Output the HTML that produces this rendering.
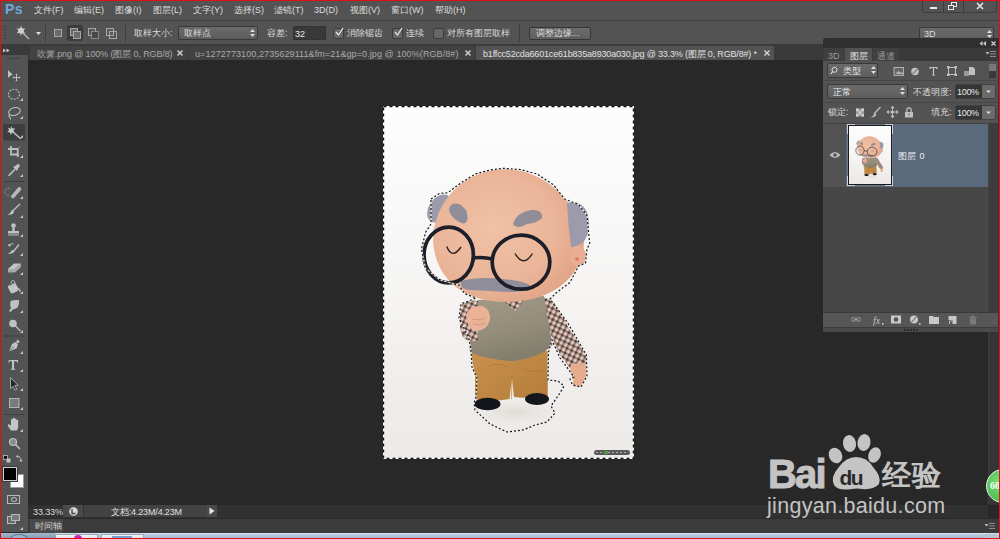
<!DOCTYPE html>
<html><head><meta charset="utf-8">
<style>
*{margin:0;padding:0;box-sizing:border-box}
html,body{width:1000px;height:539px;overflow:hidden;background:#282828;font-family:"Liberation Sans",sans-serif;}
.a{position:absolute}
.t{position:absolute;white-space:nowrap;color:#dcdcdc;font-size:9px;line-height:10px}
</style></head><body>
<div class="a" style="left:0;top:0;width:1000px;height:539px;background:#282828;overflow:hidden">

<!-- menu bar -->
<div class="a" style="left:0;top:0;width:1000px;height:20px;background:#535353"></div>
<div class="a" style="left:0;top:20px;width:1000px;height:1px;background:#3d3d3d"></div>
<!-- options bar -->
<div class="a" style="left:0;top:21px;width:1000px;height:24px;background:#535353"></div>
<div class="a" style="left:0;top:44px;width:1000px;height:1px;background:#3b3b3b"></div>

<!-- PS logo -->
<div class="t" style="left:5px;top:1px;font-size:14px;line-height:16px;font-weight:bold;color:#70a8dc;letter-spacing:0.3px">Ps</div>
<!-- menu -->
<div class="t" style="left:34px;top:5px">文件(F)</div>
<div class="t" style="left:74px;top:5px">编辑(E)</div>
<div class="t" style="left:115px;top:5px">图像(I)</div>
<div class="t" style="left:153px;top:5px">图层(L)</div>
<div class="t" style="left:193px;top:5px">文字(Y)</div>
<div class="t" style="left:234px;top:5px">选择(S)</div>
<div class="t" style="left:274px;top:5px">滤镜(T)</div>
<div class="t" style="left:314px;top:5px">3D(D)</div>
<div class="t" style="left:350px;top:5px">视图(V)</div>
<div class="t" style="left:391px;top:5px">窗口(W)</div>
<div class="t" style="left:435px;top:5px">帮助(H)</div>
<!-- window controls -->
<div class="a" style="left:922px;top:-3px;width:75px;height:16px;border:1px solid #3c3c3c;border-radius:3px;background:#535353"></div>
<div class="a" style="left:943px;top:0;width:1px;height:13px;background:#3c3c3c"></div>
<div class="a" style="left:963px;top:0;width:1px;height:13px;background:#3c3c3c"></div>
<div class="a" style="left:930px;top:7px;width:7px;height:2px;background:#e8e8e8"></div>
<svg class="a" style="left:948px;top:2px" width="10" height="9"><rect x="3.5" y="0.5" width="5" height="4" fill="none" stroke="#e8e8e8"/><rect x="0.5" y="3.5" width="5" height="4" fill="#535353" stroke="#e8e8e8"/></svg>
<svg class="a" style="left:976px;top:2px" width="8" height="8"><path d="M1 1L7 7M7 1L1 7" stroke="#e8e8e8" stroke-width="1.6"/></svg>


<!-- options content -->
<div class="a" style="left:4px;top:26px;width:2px;height:14px;background:repeating-linear-gradient(#3a3a3a 0 1px,transparent 1px 3px)"></div>
<svg class="a" style="left:15px;top:25px" width="16" height="16"><path d="M7 7L14 14" stroke="#b4b4b4" stroke-width="1.5"/><path d="M6 0.5L7.2 3.6L10.5 3.2L8.3 5.8L10.3 8.6L7 7.8L5.8 11L4.8 7.8L1.5 8.4L3.6 5.8L1.5 3.2L4.8 3.7Z" fill="#c4c4c4"/><circle cx="6" cy="5.8" r="2.6" fill="#d0d0d0"/></svg>
<svg class="a" style="left:35.5px;top:32px" width="5" height="3"><path d="M0 0H5L2.5 3Z" fill="#e0e0e0"/></svg>
<div class="a" style="left:45px;top:25px;width:1px;height:17px;background:#3e3e3e"></div>
<div class="a" style="left:54px;top:29px;width:8px;height:8px;border:1px solid #a8a8a8;background:#6a6a6a"></div>
<div class="a" style="left:67px;top:25px;width:16px;height:16px;border-radius:2px;background:#3b3b3b"></div>
<div class="a" style="left:70px;top:28px;width:8px;height:8px;border:1px solid #a8a8a8;background:#6a6a6a"></div>
<div class="a" style="left:73px;top:31px;width:8px;height:8px;border:1px solid #a8a8a8;background:#6a6a6a"></div>
<div class="a" style="left:88px;top:28px;width:8px;height:8px;border:1px solid #a8a8a8;background:#585858"></div>
<div class="a" style="left:91px;top:31px;width:8px;height:8px;border:1px solid #888;background:#474747"></div>
<div class="a" style="left:106px;top:28px;width:8px;height:8px;border:1px solid #a8a8a8;background:#585858"></div>
<div class="a" style="left:109px;top:31px;width:8px;height:8px;border:1px solid #a8a8a8;background:transparent"></div>
<div class="a" style="left:125px;top:25px;width:1px;height:17px;background:#3e3e3e"></div>
<div class="t" style="left:134px;top:28px">取样大小:</div>
<div class="a" style="left:178px;top:26px;width:80px;height:14px;border:1px solid #383838;border-radius:2px;background:linear-gradient(#6a6a6a,#5c5c5c)"></div>
<div class="t" style="left:184px;top:28px">取样点</div>
<svg class="a" style="left:250px;top:29px" width="5" height="8"><path d="M0 3L2.5 0L5 3ZM0 5L2.5 8L5 5Z" fill="#ddd"/></svg>
<div class="t" style="left:267px;top:28px">容差:</div>
<div class="a" style="left:293px;top:26px;width:33px;height:14px;background:#393939;border:1px solid #333"></div>
<div class="t" style="left:295px;top:29px;color:#e8e8e8">32</div>
<div class="a" style="left:333px;top:28px;width:11px;height:11px;border:1px solid #3a3a3a;border-radius:2px;background:#666"></div>
<svg class="a" style="left:334px;top:27px" width="10" height="10"><path d="M2 5L4.5 8L9 1" fill="none" stroke="#e8e8e8" stroke-width="1.3"/></svg>
<div class="t" style="left:347px;top:28px">消除锯齿</div>
<div class="a" style="left:392px;top:28px;width:11px;height:11px;border:1px solid #3a3a3a;border-radius:2px;background:#666"></div>
<svg class="a" style="left:393px;top:27px" width="10" height="10"><path d="M2 5L4.5 8L9 1" fill="none" stroke="#e8e8e8" stroke-width="1.3"/></svg>
<div class="t" style="left:406px;top:28px">连续</div>
<div class="a" style="left:433px;top:28px;width:11px;height:11px;border:1px solid #3a3a3a;border-radius:2px;background:#666"></div>
<div class="t" style="left:447px;top:28px">对所有图层取样</div>
<div class="a" style="left:519px;top:25px;width:1px;height:17px;background:#3e3e3e"></div>
<div class="a" style="left:529px;top:27px;width:62px;height:13px;border:1px solid #363636;border-radius:2px;background:linear-gradient(#6c6c6c,#5e5e5e)"></div>
<div class="t" style="left:536px;top:28px">调整边缘...</div>
<!-- 3D workspace dropdown -->
<div class="a" style="left:919px;top:27px;width:75px;height:14px;border:1px solid #3a3a3a;border-radius:2px;background:linear-gradient(#6a6a6a,#5e5e5e)"></div>
<div class="t" style="left:924px;top:29px">3D</div>
<svg class="a" style="left:987px;top:30px" width="5" height="8"><path d="M0 3L2.5 0L5 3ZM0 5L2.5 8L5 5Z" fill="#ddd"/></svg>

<!-- tab bar -->
<div class="a" style="left:28px;top:45px;width:972px;height:15px;background:#3a3a3a"></div>

<!-- tabs -->
<div class="a" style="left:30px;top:46px;width:157px;height:14px;background:#424242"></div>
<div class="t" style="left:37px;top:49px;color:#a8a8a8;letter-spacing:-0.12px">吹箫.png @ 100% (图层 0, RGB/8)</div>
<svg class="a" style="left:177px;top:50px" width="6" height="6"><path d="M0.5 0.5L5.5 5.5M5.5 0.5L0.5 5.5" stroke="#d8d8d8" stroke-width="1.3"/></svg>
<div class="a" style="left:188px;top:46px;width:287px;height:14px;background:#424242"></div>
<div class="t" style="left:195px;top:49px;color:#a8a8a8;letter-spacing:0.09px">u=1272773100,2735629111&amp;fm=21&amp;gp=0.jpg @ 100%(RGB/8#)</div>
<svg class="a" style="left:465px;top:50px" width="6" height="6"><path d="M0.5 0.5L5.5 5.5M5.5 0.5L0.5 5.5" stroke="#d8d8d8" stroke-width="1.3"/></svg>
<div class="a" style="left:476px;top:46px;width:298px;height:14px;background:#535353"></div>
<div class="t" style="left:483px;top:49px;color:#e0e0e0;letter-spacing:-0.17px">b1ffcc52cda6601ce61b835a8930a030.jpg @ 33.3% (图层 0, RGB/8#) *</div>
<svg class="a" style="left:764px;top:50px" width="6" height="6"><path d="M0.5 0.5L5.5 5.5M5.5 0.5L0.5 5.5" stroke="#d8d8d8" stroke-width="1.3"/></svg>

<!-- toolbar -->
<div class="a" style="left:0;top:45px;width:28px;height:10px;background:#3a3a3a"></div>
<div class="a" style="left:0;top:55px;width:28px;height:477px;background:#535353"></div>

<!-- toolbar icons -->
<svg class="a" style="left:0;top:0" width="30" height="539">
<g fill="#c8c8c8" stroke="none">
<path d="M3 48.5l3 2l-3 2zM6.5 48.5l3 2l-3 2z"/>
</g>
<path d="M7 58.5h14" stroke="#3a3a3a" stroke-dasharray="1.5 0.8"/>
<!-- move -->
<path d="M8 70L13 75L10.5 75.5L8 78Z" fill="#c0c0c0"/>
<path d="M16.5 74.5v6M13.5 77.5h6" stroke="#c0c0c0" stroke-width="1"/>
<path d="M16.5 73.5l-1.2 1.5h2.4zM16.5 81.5l-1.2-1.5h2.4zM12.5 77.5l1.5-1.2v2.4zM20.5 77.5l-1.5-1.2v2.4z" fill="#c0c0c0"/>
<!-- marquee -->
<ellipse cx="14" cy="94.3" rx="5.5" ry="5" fill="none" stroke="#bbb" stroke-width="1.1" stroke-dasharray="2 1.2"/>
<!-- lasso -->
<ellipse cx="14.5" cy="111.5" rx="6" ry="3.8" fill="none" stroke="#bbb" stroke-width="1.1" transform="rotate(-15 14.5 111.5)"/>
<path d="M10 114.5q-2 1.5 -0.5 2.5q1.5 1 1 2.5" fill="none" stroke="#bbb" stroke-width="1.1"/>
<!-- wand selected -->
<rect x="3" y="124" width="22" height="16.5" rx="2" fill="#3d3d3d"/>
<path d="M11 126l1.3 2.5l2.8 -0.3l-1.6 2.3l1.4 2.4l-2.8 -0.5l-1.3 2.5l-0.9 -2.7l-2.8 0.1l2 -2l-1 -2.6l2.6 1Z" fill="#c8c8c8"/>
<path d="M13 132l8 7" stroke="#c0c0c0" stroke-width="1.5"/>
<!-- crop -->
<path d="M11 146v8.5h8M8 149h9.7v8" fill="none" stroke="#bdbdbd" stroke-width="1.8"/>
<path d="M17.5 149l2.5-2.5" stroke="#b0b0b0" stroke-width="0.7"/>
<!-- eyedropper -->
<path d="M15 166.5l2-2q1.2-1 2.3.2q1 1.1 0 2.2l-2 2z" fill="#c4c4c4"/>
<path d="M14 166.5l3.5 3.5" stroke="#c4c4c4" stroke-width="2"/>
<path d="M15 169l-5.8 5.8l-0.7 1l1 -0.6l5.8 -5.8" fill="none" stroke="#bdbdbd" stroke-width="1.1"/>
<!-- sep -->
<path d="M4 181.5h21" stroke="#3f3f3f"/>
<!-- healing -->
<path d="M10.5 189a3.5 3.5 0 1 0 -1 6" fill="none" stroke="#a8a8a8" stroke-width="0.8" stroke-dasharray="1 0.6"/>
<path d="M11 196l7-8.5a2 2 0 0 1 3 2.5l-7 8a2 2 0 0 1 -3 -2z" fill="#b8b8b8"/>
<!-- brush -->
<path d="M12 211.5l8-7.5" stroke="#c0c0c0" stroke-width="1.4"/>
<path d="M7.5 214.5q3 -0.5 4 -4q2 0 2.5 1.5q-1.5 3.5 -6.5 2.5z" fill="#c4c4c4"/>
<!-- stamp -->
<circle cx="13.5" cy="225.5" r="2.3" fill="#c0c0c0"/>
<path d="M12.3 227h2.4v4h-2.4z" fill="#c0c0c0"/>
<path d="M8 231h11v2.5h-11zM8 234.5h11v1h-11z" fill="#c0c0c0"/>
<!-- history brush -->
<path d="M8.5 246q2 -3 5 -2" fill="none" stroke="#bbb" stroke-width="1.1"/>
<path d="M8 244l1.5 3l2 -2.5z" fill="#bbb"/>
<path d="M13 252l6-7.5" stroke="#c0c0c0" stroke-width="1.4"/>
<path d="M8 253.5q3 -0.5 4 -3.5q2 0 2.2 1.5q-1.5 3 -6.2 2z" fill="#c4c4c4"/>
<!-- eraser -->
<path d="M8 269l6-5.5h7l-6 5.5z" fill="#c4c4c4"/>
<path d="M8 269h7v3.5h-7zM15 269l6-5.5v3.5l-6 5.5z" fill="#a8a8a8"/>
<!-- bucket -->
<path d="M11 283.5q0-3.5 2.5-3q2 .5 1.2 3.5" fill="none" stroke="#bbb" stroke-width="1"/>
<path d="M8.5 285.5l6.5-3l3.5 6q0.5 1.5 -1 2.5l-4 2q-2 .8 -3 -.6l-2.5-5q-.5-1.3 .5-1.9z" fill="#c4c4c4"/>
<path d="M8.8 286l6.2-3" stroke="#888" stroke-width="0.8"/>
<path d="M18.5 288.5q2 1.5 1.5 3.5" fill="none" stroke="#c0c0c0" stroke-width="1.4"/>
<!-- smudge -->
<path d="M10.5 301q3-1.5 8.5 -1q0.5 5 -2 8l-4 1.5l-2.5 2.5l-1.5 -1l2 -3q-1.5 -3 -0.5 -7z" fill="#c0c0c0"/>
<!-- dodge/blur -->
<circle cx="13" cy="323.5" r="3.8" fill="#c0c0c0"/>
<path d="M15.5 326l5 5" stroke="#c0c0c0" stroke-width="1.2"/>
<!-- sep -->
<path d="M4 336h21" stroke="#3f3f3f"/>
<!-- pen -->
<path d="M17.5 339.5l2.5 2.5l-2.5 1.5l-1.5-1.5z" fill="#c0c0c0"/>
<path d="M15.5 342l2.5 2.5l-1.5 4l-7.5 3l3-7.5z" fill="#c0c0c0"/>
<path d="M9 351.5l4.5-4.5" stroke="#555" stroke-width="0.8"/>
<!-- type -->
<path d="M9 360h9v2.5h-1l-0.5-1.3h-2.5v7.3l1.3 0.5v0.8h-4.6v-0.8l1.3-0.5v-7.3h-2.5l-0.5 1.3h-1z" fill="#c4c4c4"/>
<!-- path select -->
<path d="M10.5 377.5v11l2.5-2.3l2 4l1.8-0.8l-2-4h3.3z" fill="#282828" stroke="#bdbdbd" stroke-width="0.8"/>
<!-- rectangle -->
<rect x="9.5" y="398.5" width="9.5" height="9" fill="#7a7a7a" stroke="#bdbdbd" stroke-width="0.9"/>
<!-- sep -->
<path d="M4 414.5h21" stroke="#3f3f3f"/>
<!-- hand -->
<path d="M11 430.5l-3-4.5q-.8-1.4 .4-1.8q.9-.3 1.6.6l1 1.2v-6.2q0-1 .9-1q.9 0 .9 1v4v-5q0-1 .9-1q.9 0 .9 1v5v-4.3q0-1 .9-1q.9 0 .9 1v4.3v-3q0-1 .9-1q.9 0 .9 1v5.5q0 2.5 -1.5 4.2z" fill="#c4c4c4"/>
<!-- zoom -->
<circle cx="13" cy="442" r="3.5" fill="#8c8c8c" stroke="#c0c0c0" stroke-width="1.2"/>
<path d="M15.5 444.5l4.5 4.5" stroke="#c0c0c0" stroke-width="1.6"/>
<!-- default colors / swap -->
<rect x="3.5" y="455.5" width="4" height="4" fill="#111" stroke="#c0c0c0" stroke-width="0.8"/>
<rect x="6.5" y="458.5" width="4" height="4" fill="#c0c0c0"/>
<path d="M17 456.5q4 -0.5 4 4" fill="none" stroke="#c0c0c0" stroke-width="1"/>
<path d="M16 456.5l2-1.8v3.6zM21 462l-1.8-2h3.6z" fill="#c0c0c0"/>
<!-- triangles -->
<g fill="#c8c8c8">
<path d="M23 98v3h-3z"/><path d="M23 116v3h-3z"/><path d="M23 155v3h-3z"/><path d="M23 174v3h-3z"/><path d="M23 135v3h-3z"/>
<path d="M23 196v3h-3z"/><path d="M23 215v3h-3z"/><path d="M23 234v3h-3z"/><path d="M23 253v3h-3z"/><path d="M23 272v3h-3z"/>
<path d="M23 291v3h-3z"/><path d="M23 310v3h-3z"/><path d="M23 330v3h-3z"/><path d="M23 351v3h-3z"/><path d="M23 369v3h-3z"/>
<path d="M23 388v3h-3z"/><path d="M23 407v3h-3z"/><path d="M23 429v3h-3z"/><path d="M23 527v3h-3z"/>
</g>
</svg>
<!-- fg/bg color -->
<div class="a" style="left:10px;top:474px;width:14px;height:14px;background:#fff;border:1px solid #999"></div>
<div class="a" style="left:3px;top:467px;width:14px;height:14px;background:#000;border:1px solid #cfcfcf;box-shadow:0 0 0 1px #3a3a3a"></div>
<!-- quick mask -->
<div class="a" style="left:7px;top:495px;width:13px;height:9px;border:1px solid #b8b8b8;background:#555"></div>
<div class="a" style="left:10.5px;top:497px;width:6px;height:5px;border:1px solid #b8b8b8;border-radius:50%"></div>
<!-- screen mode -->
<div class="a" style="left:7px;top:516px;width:9px;height:8px;border:1px solid #b8b8b8;background:#6a6a6a"></div>
<div class="a" style="left:11px;top:514px;width:9px;height:7px;border:1px solid #b8b8b8;background:#7a7a7a"></div>

<!-- status bar -->
<div class="a" style="left:28px;top:505px;width:960px;height:13px;background:#313131"></div>
<div class="a" style="left:30px;top:505px;width:33px;height:12px;background:#323232"></div>
<div class="t" style="left:33px;top:507px;color:#d8d8d8;letter-spacing:-0.1px">33.33%</div>
<div class="a" style="left:63px;top:505px;width:20px;height:12px;background:#4a4a4a"></div>
<svg class="a" style="left:68px;top:506px" width="11" height="11"><circle cx="5.5" cy="5.5" r="4.3" fill="#d8d8d8"/><path d="M4 3v4.5h3.5" fill="none" stroke="#4a4a4a" stroke-width="1.4"/></svg>
<div class="a" style="left:84px;top:505px;width:123px;height:12px;background:#434343"></div>
<div class="t" style="left:111px;top:507px;color:#e0e0e0;letter-spacing:-0.15px">文档:4.23M/4.23M</div>
<div class="a" style="left:207px;top:505px;width:10px;height:12px;background:#4a4a4a"></div>
<svg class="a" style="left:209px;top:507px" width="6" height="8"><path d="M0.5 0.5L5.5 4L0.5 7.5Z" fill="#e8e8e8"/></svg>
<!-- timeline -->
<div class="a" style="left:28px;top:518px;width:972px;height:15px;background:#3b3b3b;border-top:1px solid #2a2a2a"></div>
<div class="a" style="left:30px;top:519px;width:33px;height:14px;background:#4a4a4a"></div>
<div class="t" style="left:35px;top:521px;color:#d0d0d0">时间轴</div>
<svg class="a" style="left:984px;top:522px" width="12" height="8"><path d="M0.5 2h4l-2 2.5z" fill="#c0c0c0"/><path d="M5 1.5h6M5 4h6M5 6.5h6" stroke="#8a8a8a" stroke-width="1.2"/></svg>
<!-- taskbar -->
<div class="a" style="left:0;top:533px;width:1000px;height:6px;background:linear-gradient(#dce8f4,#b0c6dc 35%,#a2b8d0)"></div>
<div class="a" style="left:0;top:533px;width:55px;height:6px;background:linear-gradient(#a4b8cc,#8298b0)"></div>
<div class="a" style="left:10px;top:534px;width:18px;height:10px;border-radius:50%;border:1px solid #5a7a9a;background:#9ab4cc"></div>
<div class="a" style="left:55px;top:534px;width:43px;height:5px;background:linear-gradient(#f4f6f8,#dde4ea);border:1px solid #9aaabb"></div>
<div class="a" style="left:74px;top:535px;width:8px;height:8px;border-radius:50%;background:#d020c0"></div>
<div class="a" style="left:101px;top:534px;width:43px;height:5px;background:linear-gradient(#f4f6f8,#dde4ea);border:1px solid #9aaabb"></div>
<div class="a" style="left:112px;top:536px;width:20px;height:3px;background:#7aa0d0"></div>
<div class="a" style="left:986px;top:534px;width:12px;height:5px;background:#b8c4d0"></div>
<!-- image -->

<svg class="a" style="left:383px;top:106px" width="251" height="353" viewBox="383 106 251 353">
<defs>
 <linearGradient id="bg" x1="0" y1="0" x2="0" y2="1"><stop offset="0" stop-color="#fdfdfd"/><stop offset="0.5" stop-color="#f6f5f4"/><stop offset="1" stop-color="#ece9e7"/></linearGradient>
 <radialGradient id="skin" cx="0.4" cy="0.45" r="0.7"><stop offset="0" stop-color="#f0c2a6"/><stop offset="0.6" stop-color="#eab498"/><stop offset="1" stop-color="#de9e82"/></radialGradient>
 <radialGradient id="sh" cx="0.5" cy="0.5" r="0.5"><stop offset="0" stop-color="#dcdad2" stop-opacity="0.9"/><stop offset="1" stop-color="#e8e6e2" stop-opacity="0"/></radialGradient>
 <pattern id="plaid" width="5" height="5" patternUnits="userSpaceOnUse" patternTransform="rotate(25)"><rect width="5" height="5" fill="#dcd2ce"/><rect width="2.2" height="5" fill="#9a7c70"/><rect width="5" height="2.2" fill="#a08276"/><rect width="2.2" height="2.2" fill="#54382e"/></pattern>
 <linearGradient id="vest" x1="0" y1="0" x2="0.3" y2="1"><stop offset="0" stop-color="#a09a86"/><stop offset="0.6" stop-color="#938d7a"/><stop offset="1" stop-color="#847e6c"/></linearGradient>
 <linearGradient id="pants" x1="0" y1="0" x2="1" y2="1"><stop offset="0" stop-color="#c8924c"/><stop offset="1" stop-color="#b47c3a"/></linearGradient>
</defs>
<rect x="383" y="106" width="251" height="353" fill="url(#bg)"/>
<g id="man">
 <ellipse cx="515" cy="412" rx="48" ry="14" fill="url(#sh)"/>
 <!-- right sleeve -->
 <path d="M543 298L551 299Q562 312 568 327Q580 344 586 356Q587 366 583 369L570 368L560 355L553 340L545 318Z" fill="url(#plaid)"/>
 <!-- right hand -->
 <path d="M570 366Q580 360 586 365Q588 378 582 386Q576 389 572 385Q575 380 571 375Z" fill="#e6ab8c"/>
 <!-- pants -->
 <path d="M471 352.6L547.7 351L547.7 396.4Q534 399 514 397L512 378L509.5 399Q492 402 475 399L475 376Z" fill="url(#pants)"/>
 <path d="M488 366Q498 362 508 367M522 369Q532 373 542 371M512 376L511.5 399" stroke="#a4702e" stroke-width="1" fill="none" opacity="0.55"/>
 <!-- shoes -->
 <ellipse cx="487.5" cy="404" rx="13" ry="6.2" fill="#15161c"/>
 <ellipse cx="537" cy="399" rx="12" ry="6" fill="#15161c"/>
 <!-- vest -->
 <path d="M477.5 300L544 296Q548 320 552.6 345Q540 358 512.6 361Q488 360 470 352.6Q468 330 477.5 300Z" fill="url(#vest)"/>
 <path d="M504 301L515 311L525 299Z" fill="url(#plaid)"/>
 <!-- left sleeve -->
 <path d="M462 304Q469 299 478 301L478 340Q469 344 462 336Q457 320 462 304Z" fill="url(#plaid)"/>
 <!-- fist -->
 <path d="M466 315Q469 305 482 306Q491 309 490 320Q487 331 476 331Q466 328 466 315Z" fill="#eab296"/>
 <path d="M472 319Q479 321 486 318M473 324Q479 326 486 323" stroke="#cf8f72" stroke-width="0.8" fill="none"/>
 <!-- head -->
 <ellipse cx="439.5" cy="208.5" rx="10.5" ry="15.5" fill="#9c9aab" transform="rotate(35 439.5 208.5)"/>
 
 <path d="M433 240C433 208 458 170 505 169C542 169 576 200 584 235C586 270 560 302 505 302C465 302 435 280 433 240Z" fill="url(#skin)"/>
 <path d="M567 203Q580 199 587 212Q592 228 585 240Q578 247 571 247Q568 225 567 203Z" fill="#9c9aab"/>
 <ellipse cx="578" cy="256" rx="8" ry="10.5" fill="#e9ae92"/>
 <circle cx="577" cy="259" r="1.8" fill="#e07a5a"/>
 <!-- eyebrows -->
 <path d="M449 209Q451 202 459 204Q468 208 467.5 219Q466 226 459 222Q449 216 449 209Z" fill="#8e8d98"/>
 <path d="M513 224Q517 212 531 210Q543 209 542 218Q537 223 527 224Q517 230 513 224Z" fill="#8e8d98"/>
 <!-- mustache -->
 <path d="M461 281Q478 276 503 279Q522 281 530 285Q527 292 510 292Q490 291 470 290Q459 289 461 281Z" fill="#908e9a"/>
 <!-- eyes -->
 <path d="M446.8 246.5Q452 260 461 247" fill="none" stroke="#2a2020" stroke-width="1.4"/>
 <path d="M515 253.5Q523.5 268 532.5 253.5" fill="none" stroke="#2a2020" stroke-width="1.4"/>
 <!-- glasses -->
 <ellipse cx="448.7" cy="255" rx="24.7" ry="27.9" fill="none" stroke="#1c1f28" stroke-width="3.7"/>
 <ellipse cx="521" cy="262.2" rx="28.8" ry="27" fill="none" stroke="#1c1f28" stroke-width="3.7"/>
 <path d="M472.5 258Q482 256.5 493 259" fill="none" stroke="#1c1f28" stroke-width="3.4"/>
</g>
<!-- marching ants -->
<g fill="none" stroke-width="1.2">
 <path id="ants1" d="M431 199L439.5 193.4L447.8 192.8L461.7 182.3L475.6 173.9L490 170L503.5 168.3L520 169.5L536.9 173.9L553.6 185L564.7 199L578.6 204.5L587 215.6L589.7 243.5L587 249L585.5 263L578.6 266L570 282.4L556 293L550 299L567.6 322.6L586.4 355L587 376L581 387L572.6 385L570 379L574 377L569 370L560 358L552 340L548.5 352L548 380L558 381L564 386L560 393L551 406L555 413L547 422L535 425L523 430L507 432L490 424L475 410L474 403L476 397L477 378L472 367L471 350L469 339L459 318L461 304L476 298L464.5 293.6L459 285.2L439.5 279.6L425.6 268.5L421.4 249L425.6 232.3L431 224Z" stroke="#f4f4f4"/>
 <path d="M431 199L439.5 193.4L447.8 192.8L461.7 182.3L475.6 173.9L490 170L503.5 168.3L520 169.5L536.9 173.9L553.6 185L564.7 199L578.6 204.5L587 215.6L589.7 243.5L587 249L585.5 263L578.6 266L570 282.4L556 293L550 299L567.6 322.6L586.4 355L587 376L581 387L572.6 385L570 379L574 377L569 370L560 358L552 340L548.5 352L548 380L558 381L564 386L560 393L551 406L555 413L547 422L535 425L523 430L507 432L490 424L475 410L474 403L476 397L477 378L472 367L471 350L469 339L459 318L461 304L476 298L464.5 293.6L459 285.2L439.5 279.6L425.6 268.5L421.4 249L425.6 232.3L431 224Z" stroke="#161616" stroke-dasharray="2 2"/>
</g>
<rect x="383.5" y="106.5" width="250" height="352" fill="none" stroke="#fff" stroke-width="1.4"/>
<rect x="383.5" y="106.5" width="250" height="352" fill="none" stroke="#111" stroke-width="1.4" stroke-dasharray="3 3"/>
<rect x="594" y="450" width="36" height="5" rx="2.5" fill="#5a5a5a"/><path d="M596 452.5h32" stroke="#aaa" stroke-width="1" stroke-dasharray="2 2"/>
<rect x="604" y="451" width="4" height="3" fill="#4a9a4a"/>
</svg>


<!-- panel -->

<div class="a" style="left:988px;top:38px;width:11px;height:467px;background:#353535;border-left:1px solid #3d3d3d"></div>
<div class="a" style="left:823px;top:38px;width:175px;height:294px;background:#535353;border-radius:3px 0 0 0;overflow:hidden">
 <div class="a" style="left:0;top:0;width:175px;height:10px;background:#2f2f2f"></div>
 <div class="a" style="left:0;top:10px;width:175px;height:13px;background:#3a3a3a"></div>
 <div class="a" style="left:1px;top:10px;width:21px;height:13px;background:#404040"></div>
 <div class="a" style="left:22px;top:10px;width:27px;height:14px;background:#535353"></div>
 <div class="a" style="left:50px;top:10px;width:26px;height:13px;background:#404040"></div>
 <div class="a" style="left:0;top:23px;width:175px;height:1px;background:#535353"></div>
 <div class="a" style="left:0;top:187px;width:165px;height:1px;background:#3c3c3c"></div>
 <div class="a" style="left:0;top:149px;width:165px;height:125px;background:#474747"></div>
 <div class="a" style="left:0;top:85px;width:165px;height:64px;background:#535353"></div>
 <div class="a" style="left:0;top:42px;width:175px;height:1px;background:#474747"></div>
 <div class="a" style="left:0;top:64px;width:175px;height:1px;background:#474747"></div>
 <div class="a" style="left:0;top:85px;width:165px;height:1px;background:#434343"></div>
 <div class="a" style="left:165px;top:85px;width:10px;height:189px;background:#3c3c3c;border-left:1px solid #444"></div>
 <div class="a" style="left:0;top:274px;width:175px;height:15px;background:#565656;border-top:1px solid #3a3a3a"></div>
 <div class="a" style="left:0;top:289px;width:175px;height:5px;background:#4a4a4a;border-top:1px solid #3c3c3c"></div>
</div>
<!-- panel content -->
<svg class="a" style="left:978px;top:40px" width="20" height="8"><path d="M4.5 1v5L1.5 3.5zM8 1v5L5 3.5z" fill="#c8c8c8"/><path d="M13.5 1.5l4 4M17.5 1.5l-4 4" stroke="#d0d0d0" stroke-width="1.2"/></svg>
<div class="t" style="left:828px;top:50.5px;color:#9a9a9a">3D</div>
<div class="t" style="left:850px;top:50.5px;color:#e4e4e4">图层</div>
<div class="t" style="left:877px;top:50.5px;color:#9a9a9a">通道</div>
<svg class="a" style="left:985px;top:50px" width="12" height="8"><path d="M0.5 2h4l-2 2.5z" fill="#c0c0c0"/><path d="M5 1.5h6M5 4h6M5 6.5h6" stroke="#8a8a8a" stroke-width="1.2"/></svg>
<!-- filter row -->
<div class="a" style="left:827px;top:63px;width:51px;height:15px;border:1px solid #3a3a3a;border-radius:2px;background:linear-gradient(#6a6a6a,#5e5e5e)"></div>
<svg class="a" style="left:830px;top:66px" width="8" height="9"><circle cx="4.5" cy="3.8" r="2.5" fill="none" stroke="#ddd" stroke-width="1"/><path d="M3 5.3L0.8 7.8" stroke="#ddd" stroke-width="1.1"/></svg>
<div class="t" style="left:843px;top:66px;color:#eee">类型</div>
<svg class="a" style="left:871px;top:66px" width="5" height="8"><path d="M0 3L2.5 0L5 3ZM0 5L2.5 8L5 5Z" fill="#ddd"/></svg>
<svg class="a" style="left:878px;top:64px" width="120" height="16">
 <rect x="16" y="3.5" width="9.5" height="8" fill="#666" stroke="#bbb" stroke-width="0.9"/><path d="M17.5 10l3-3l2 2l1-1l2 2z" fill="#bbb"/>
 <circle cx="37" cy="7.5" r="3.8" fill="#c0c0c0"/><path d="M34.5 10l5-5" stroke="#555" stroke-width="1"/>
 <path d="M51.5 3h8v2h-1l-0.4-1h-2v6.5l1 .4v.6h-3.2v-.6l1-.4v-6.5h-2l-.4 1h-1z" fill="#c8c8c8"/>
 <rect x="70.5" y="3.5" width="7" height="7" fill="none" stroke="#c0c0c0" stroke-width="1"/>
 <rect x="69" y="2" width="2.5" height="2.5" fill="#c0c0c0"/><rect x="76.5" y="2" width="2.5" height="2.5" fill="#c0c0c0"/><rect x="69" y="9.5" width="2.5" height="2.5" fill="#c0c0c0"/><rect x="76.5" y="9.5" width="2.5" height="2.5" fill="#c0c0c0"/>
 <path d="M89 6h2v-3h4l2 2v6h-6v-5z" fill="#c0c0c0"/><rect x="86" y="7" width="5" height="5" fill="#9a9a9a"/>
 <rect x="111" y="0" width="7" height="7" fill="#777"/><rect x="111" y="7" width="7" height="7" fill="#3a3a3a"/>
</svg>
<!-- blend row -->
<div class="a" style="left:827px;top:84px;width:81px;height:15px;border:1px solid #3a3a3a;border-radius:2px;background:linear-gradient(#6a6a6a,#5e5e5e)"></div>
<div class="t" style="left:833px;top:87px;color:#eee">正常</div>
<svg class="a" style="left:900px;top:87px" width="5" height="8"><path d="M0 3L2.5 0L5 3ZM0 5L2.5 8L5 5Z" fill="#ddd"/></svg>
<div class="t" style="left:913px;top:87px">不透明度:</div>
<div class="a" style="left:955px;top:84px;width:41px;height:15px;border:1px solid #404040;border-radius:2px;background:#6a6a6a"></div>
<div class="a" style="left:956px;top:85px;width:26px;height:13px;background:#353535"></div>
<div class="t" style="left:957px;top:87px;color:#e8e8e8;letter-spacing:-0.3px">100%</div>
<svg class="a" style="left:986px;top:90px" width="6" height="4"><path d="M0 0.5H5L2.5 3Z" fill="#e0e0e0"/></svg>
<!-- lock row -->
<div class="t" style="left:828px;top:107px">锁定:</div>
<svg class="a" style="left:853px;top:105px" width="64" height="14">
 <rect x="3" y="3.5" width="8" height="8" fill="#9a9a9a"/>
 <path d="M3 3.5h2.7v2.7h-2.7zM8.3 3.5h2.7v2.7h-2.7zM5.7 6.2h2.7v2.7h-2.7zM3 8.9h2.7v2.6h-2.7zM8.3 8.9h2.7v2.6h-2.7z" fill="#d0d0d0"/>
 <path d="M21 9l6.5-7" stroke="#c0c0c0" stroke-width="1.3"/><path d="M16 12.5q3.5 0.3 5.5-4q1.8 0 1.8 1.8q-2.3 2.8 -7.3 2.2z" fill="#c4c4c4"/>
 <path d="M39.5 3v8M35.5 7h8" stroke="#c0c0c0" stroke-width="1"/><path d="M39.5 0.8l-2.2 2.4h4.4zM39.5 13.2l-2.2-2.4h4.4zM33.3 7l2.4-2.2v4.4zM45.7 7l-2.4-2.2v4.4z" fill="#c0c0c0"/><circle cx="39.5" cy="7" r="1.5" fill="#c0c0c0"/>
 <path d="M53.8 7v-2a2.2 2.2 0 0 1 4.4 0v2" fill="none" stroke="#c0c0c0" stroke-width="1.2"/><rect x="52" y="7" width="8" height="5.5" fill="#c0c0c0"/><rect x="55.5" y="8.5" width="1" height="2" fill="#535353"/>
</svg>
<div class="t" style="left:931px;top:107px">填充:</div>
<div class="a" style="left:955px;top:105px;width:41px;height:15px;border:1px solid #404040;border-radius:2px;background:#6a6a6a"></div>
<div class="a" style="left:956px;top:106px;width:26px;height:13px;background:#353535"></div>
<div class="t" style="left:957px;top:108px;color:#e8e8e8;letter-spacing:-0.3px">100%</div>
<svg class="a" style="left:986px;top:111px" width="6" height="4"><path d="M0 0.5H5L2.5 3Z" fill="#e0e0e0"/></svg>
<!-- layer row -->
<div class="a" style="left:846px;top:124px;width:142px;height:63px;background:#5a697c"></div>
<svg class="a" style="left:829px;top:151px" width="12" height="8"><path d="M0.5 4q5.5-6 11 0q-5.5 6-11 0z" fill="#bdbdbd"/><circle cx="6" cy="4" r="1.8" fill="#535353"/></svg>
<div class="t" style="left:898px;top:151px;color:#f0f0f0;font-size:9px;letter-spacing:0.3px">图层 0</div>

<div class="a" style="left:847px;top:124px;width:46px;height:62px;background:#c8d0da"></div>
<div class="a" style="left:855px;top:124px;width:30px;height:62px;background:#6a7888"></div>
<div class="a" style="left:847px;top:134px;width:46px;height:42px;background:#6a7888"></div>
<div class="a" style="left:848px;top:125px;width:44px;height:60px;background:#1a1a1a"></div>
<svg class="a" style="left:849px;top:126px" width="42" height="58" viewBox="383 106 251 353" preserveAspectRatio="none"><rect x="383" y="106" width="251" height="353" fill="url(#bg)"/><use href="#man"/></svg>
<!-- footer icons -->
<svg class="a" style="left:848px;top:313px" width="150" height="14">
 <path d="M6 6.5h4" stroke="#9a9a9a" stroke-width="1"/><rect x="3.5" y="4.5" width="4" height="4" rx="2" fill="none" stroke="#9a9a9a"/><rect x="8.5" y="4.5" width="4" height="4" rx="2" fill="none" stroke="#9a9a9a"/>
 <text x="25" y="10.5" font-family="Liberation Serif" font-style="italic" font-size="10" fill="#c0c0c0">fx</text><rect x="34" y="10" width="1.5" height="1.5" fill="#ddd"/>
 <rect x="43" y="2.5" width="10" height="8" fill="#c8c8c8"/><circle cx="48" cy="6.5" r="2.2" fill="#535353"/>
 <circle cx="66" cy="6.5" r="4" fill="#c8c8c8"/><path d="M63 9.5l6-6" stroke="#555" stroke-width="1"/><rect x="71" y="10" width="1.5" height="1.5" fill="#ddd"/>
 <path d="M81 3h4l1 1h5v7h-10z" fill="#c8c8c8"/>
 <path d="M100.5 3h8v8h-8z" fill="#c8c8c8"/><path d="M100 11.5v-4.5h4.5v4.5z" fill="#535353"/><path d="M101.5 11v-3h3" fill="none" stroke="#c8c8c8" stroke-width="0.9"/>
 <path d="M121 4h8v1h-8zM122 5.5h6v6h-6z" fill="#7a7a7a"/><rect x="123.5" y="2.5" width="3" height="1.5" fill="#7a7a7a"/>
 <path d="M141 11l7-7v7z" fill="#5c5c5c"/>
</svg>
<div class="a" style="left:904px;top:328.5px;width:14px;height:2px;background:repeating-linear-gradient(90deg,#2e2e2e 0 2px,transparent 2px 3px)"></div>



<!-- watermark -->
<svg class="a" style="left:760px;top:430px" width="200" height="95" viewBox="760 430 200 95">
 <g fill="#c4c4c4">
  <ellipse cx="849.5" cy="443.5" rx="6.5" ry="8.5" transform="rotate(-10 849.5 443.5)"/>
  <ellipse cx="864" cy="442.5" rx="6.5" ry="8.5" transform="rotate(10 864 442.5)"/>
  <ellipse cx="835.5" cy="455.5" rx="6.5" ry="8" transform="rotate(-25 835.5 455.5)"/>
  <ellipse cx="874.5" cy="455" rx="6" ry="8" transform="rotate(25 874.5 455)"/>
  <path d="M856 457Q867 457 873 467Q882 477 879 484Q874 490 862 489Q857 488 852 489Q838 491 834 485Q830 477 839 467Q846 457 856 457Z"/>
 </g>
 <text x="768" y="488" font-family="Liberation Sans" font-weight="bold" font-size="40" fill="#c4c4c4" stroke="#c4c4c4" stroke-width="1" letter-spacing="-1.8">Bai</text>
 <text x="839.5" y="485" font-family="Liberation Sans" font-weight="bold" font-size="21" fill="#2a2a2a" letter-spacing="-1.5">du</text>
 <text x="882" y="485" font-family="Liberation Sans" font-weight="bold" font-size="29" fill="#c4c4c4" letter-spacing="1">经验</text>
 <text x="767" y="513" font-family="Liberation Sans" font-size="21.5" fill="#c4c4c4" letter-spacing="0.3">jingyan.baidu.com</text>
</svg>
<!-- green badge -->
<div class="a" style="left:986px;top:469px;width:34px;height:34px;border-radius:50%;background:radial-gradient(circle at 40% 40%,#7ee07a,#2fae3a);border:1.5px solid #e8f4e8"></div>
<div class="t" style="left:990px;top:481px;font-size:10px;font-weight:bold;color:#fff;font-family:'Liberation Serif',serif">60</div>
<!-- red border -->
<div class="a" style="left:0;top:0;width:1000px;height:1px;background:#e01010"></div>
<div class="a" style="left:0;top:0;width:1px;height:539px;background:#e01010"></div>
<div class="a" style="left:999px;top:0;width:1px;height:539px;background:#e01010"></div>
<div class="a" style="left:0;top:538px;width:1000px;height:1px;background:#e01010"></div>
</div>
</body></html>
